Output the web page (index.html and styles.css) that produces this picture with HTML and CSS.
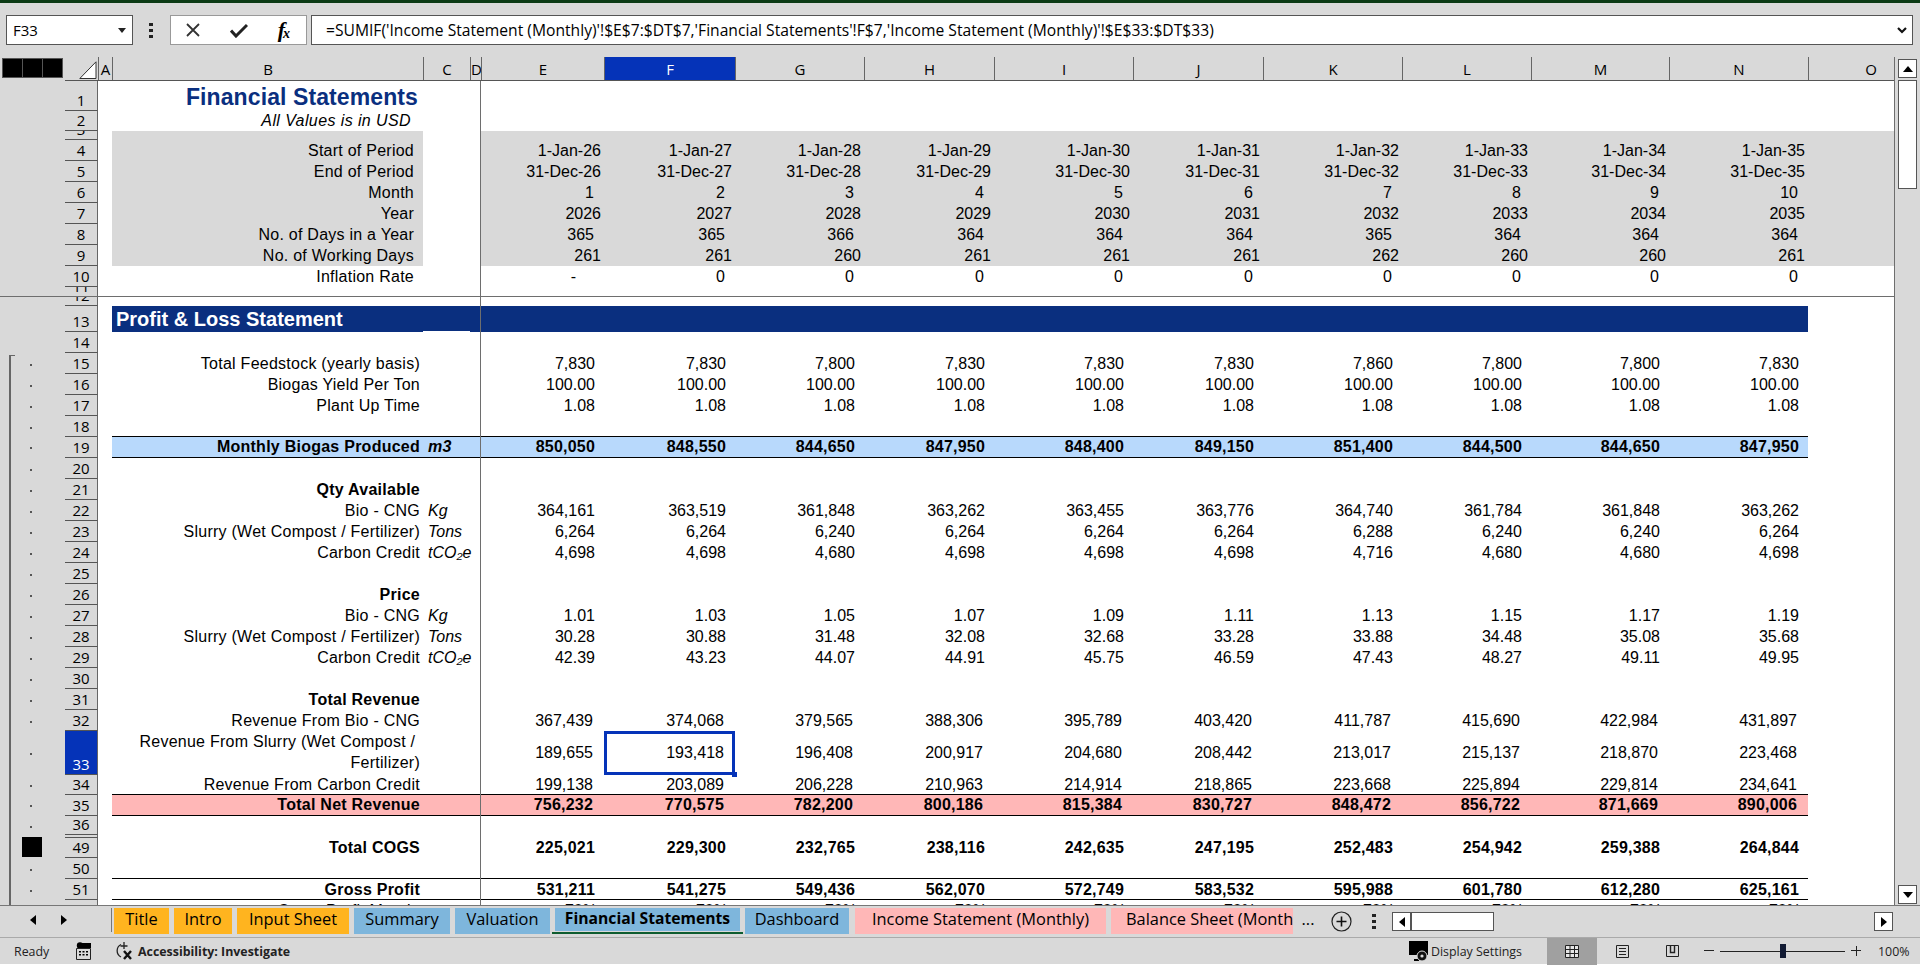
FILE: index.html
```html
<!DOCTYPE html>
<html>
<head>
  <meta charset="UTF-8">
  <title>Financial Statements</title>
  <link rel="stylesheet" href="styles.css">
</head>
<body>
  <div class="app-strip"></div>

  <!-- Formula bar -->
  <div class="formula-bar">
    <div class="name-box">F33<svg class="name-arrow" width="8" height="5" viewBox="0 0 8 5"><path d="M0 0h8L4 5z"/></svg></div>
    <div class="bar-dots"><i></i><i></i><i></i></div>
    <div class="cmd-box">
      <svg width="16" height="16" viewBox="0 0 16 16"><path d="M2 2l12 12M14 2L2 14" fill="none" stroke="#333" stroke-width="1.8"/></svg>
      <svg width="18" height="15" viewBox="0 0 18 15"><path d="M1 7.500l5 5.500L17 2" fill="none" stroke="#222" stroke-width="3"/></svg>
      <span class="fx">f<sub>x</sub></span>
    </div>
    <div class="formula-input">=SUMIF('Income Statement (Monthly)'!$E$7:$DT$7,'Financial Statements'!F$7,'Income Statement (Monthly)'!$E$33:$DT$33)<svg class="formula-chevron" width="10" height="7" viewBox="0 0 10 7"><path d="M1 1l4 4 4-4" fill="none" stroke="#111" stroke-width="2.2"/></svg></div>
  </div>

  <div class="sheet-area">
    <div class="sheet">
      <!-- Column headers -->
      <div class="col-head">
        <div class="level-btns"><i></i><i></i><i></i></div>
        <svg class="corner" width="18" height="18" viewBox="0 0 18 18"><path d="M17 .8V17.500H.8z" fill="#fff" stroke="#333"/></svg>
        <div class="col-letters">
          <span>A</span><span>B</span><span>C</span><span>D</span><span>E</span><span class="active">F</span><span>G</span><span>H</span><span>I</span><span>J</span><span>K</span><span>L</span><span>M</span><span>N</span><span class="last">O</span>
        </div>
      </div>

      <div class="row h30 title-row"><i class="gutter"></i><i class="num">1</i><i class="a"></i><div class="cells"><span class="lbl title">Financial Statements</span></div><i class="o"></i></div>
      <div class="row h20 sub-row"><i class="gutter"></i><i class="num">2</i><i class="a"></i><div class="cells"><span class="lbl subtitle">All Values is in USD</span></div><i class="o"></i></div>
      <div class="row h9 gray"><i class="gutter"></i><i class="num">3</i><i class="a"></i><div class="cells"></div><i class="o"></i></div>
      <div class="row gray date"><i class="gutter"></i><i class="num">4</i><i class="a"></i><div class="cells"><span class="lbl">Start of Period</span><span class="e">1-Jan-26</span><span>1-Jan-27</span><span>1-Jan-28</span><span>1-Jan-29</span><span>1-Jan-30</span><span>1-Jan-31</span><span>1-Jan-32</span><span>1-Jan-33</span><span>1-Jan-34</span><span>1-Jan-35</span></div><i class="o"></i></div>
      <div class="row gray date"><i class="gutter"></i><i class="num">5</i><i class="a"></i><div class="cells"><span class="lbl">End of Period</span><span class="e">31-Dec-26</span><span>31-Dec-27</span><span>31-Dec-28</span><span>31-Dec-29</span><span>31-Dec-30</span><span>31-Dec-31</span><span>31-Dec-32</span><span>31-Dec-33</span><span>31-Dec-34</span><span>31-Dec-35</span></div><i class="o"></i></div>
      <div class="row gray plain"><i class="gutter"></i><i class="num">6</i><i class="a"></i><div class="cells"><span class="lbl">Month</span><span class="e">1</span><span>2</span><span>3</span><span>4</span><span>5</span><span>6</span><span>7</span><span>8</span><span>9</span><span>10</span></div><i class="o"></i></div>
      <div class="row gray date"><i class="gutter"></i><i class="num">7</i><i class="a"></i><div class="cells"><span class="lbl">Year</span><span class="e">2026</span><span>2027</span><span>2028</span><span>2029</span><span>2030</span><span>2031</span><span>2032</span><span>2033</span><span>2034</span><span>2035</span></div><i class="o"></i></div>
      <div class="row gray plain"><i class="gutter"></i><i class="num">8</i><i class="a"></i><div class="cells"><span class="lbl">No. of Days in a Year</span><span class="e">365</span><span>365</span><span>366</span><span>364</span><span>364</span><span>364</span><span>365</span><span>364</span><span>364</span><span>364</span></div><i class="o"></i></div>
      <div class="row gray date"><i class="gutter"></i><i class="num">9</i><i class="a"></i><div class="cells"><span class="lbl">No. of Working Days</span><span class="e">261</span><span>261</span><span>260</span><span>261</span><span>261</span><span>261</span><span>262</span><span>260</span><span>260</span><span>261</span></div><i class="o"></i></div>
      <div class="row top-lbl plain"><i class="gutter"></i><i class="num">10</i><i class="a"></i><div class="cells"><span class="lbl">Inflation Rate</span><span class="e dash">-</span><span>0</span><span>0</span><span>0</span><span>0</span><span>0</span><span>0</span><span>0</span><span>0</span><span>0</span></div><i class="o"></i></div>
      <div class="row h10"><i class="gutter"></i><i class="num">11</i><i class="a"></i><div class="cells"></div><i class="o"></i></div>
      <div class="row h9"><i class="gutter"></i><i class="num">12</i><i class="a"></i><div class="cells"></div><i class="o"></i></div>
      <div class="row h26 navy"><i class="gutter"></i><i class="num">13</i><i class="a"></i><div class="cells"><span class="lbl section">Profit &amp; Loss Statement</span><span class="notch"></span></div><i class="o"></i></div>
      <div class="row"><i class="gutter"></i><i class="num">14</i><i class="a"></i><div class="cells"></div><i class="o"></i></div>
      <div class="row"><i class="gutter dot"></i><i class="num">15</i><i class="a"></i><div class="cells"><span class="lbl">Total Feedstock (yearly basis)</span><span class="e">7,830</span><span>7,830</span><span>7,800</span><span>7,830</span><span>7,830</span><span>7,830</span><span>7,860</span><span>7,800</span><span>7,800</span><span>7,830</span></div><i class="o"></i></div>
      <div class="row"><i class="gutter dot"></i><i class="num">16</i><i class="a"></i><div class="cells"><span class="lbl">Biogas Yield Per Ton</span><span class="e">100.00</span><span>100.00</span><span>100.00</span><span>100.00</span><span>100.00</span><span>100.00</span><span>100.00</span><span>100.00</span><span>100.00</span><span>100.00</span></div><i class="o"></i></div>
      <div class="row"><i class="gutter dot"></i><i class="num">17</i><i class="a"></i><div class="cells"><span class="lbl">Plant Up Time</span><span class="e">1.08</span><span>1.08</span><span>1.08</span><span>1.08</span><span>1.08</span><span>1.08</span><span>1.08</span><span>1.08</span><span>1.08</span><span>1.08</span></div><i class="o"></i></div>
      <div class="row"><i class="gutter dot"></i><i class="num">18</i><i class="a"></i><div class="cells"></div><i class="o"></i></div>
      <div class="row band blue bold"><i class="gutter dot"></i><i class="num">19</i><i class="a"></i><div class="cells"><span class="lbl">Monthly Biogas Produced</span><span class="u">m3</span><span class="e">850,050</span><span>848,550</span><span>844,650</span><span>847,950</span><span>848,400</span><span>849,150</span><span>851,400</span><span>844,500</span><span>844,650</span><span>847,950</span></div><i class="o"></i></div>
      <div class="row"><i class="gutter dot"></i><i class="num">20</i><i class="a"></i><div class="cells"></div><i class="o"></i></div>
      <div class="row bold"><i class="gutter dot"></i><i class="num">21</i><i class="a"></i><div class="cells"><span class="lbl">Qty Available</span></div><i class="o"></i></div>
      <div class="row"><i class="gutter dot"></i><i class="num">22</i><i class="a"></i><div class="cells"><span class="lbl">Bio - CNG</span><span class="u">Kg</span><span class="e">364,161</span><span>363,519</span><span>361,848</span><span>363,262</span><span>363,455</span><span>363,776</span><span>364,740</span><span>361,784</span><span>361,848</span><span>363,262</span></div><i class="o"></i></div>
      <div class="row"><i class="gutter dot"></i><i class="num">23</i><i class="a"></i><div class="cells"><span class="lbl">Slurry (Wet Compost / Fertilizer)</span><span class="u">Tons</span><span class="e">6,264</span><span>6,264</span><span>6,240</span><span>6,264</span><span>6,264</span><span>6,264</span><span>6,288</span><span>6,240</span><span>6,240</span><span>6,264</span></div><i class="o"></i></div>
      <div class="row"><i class="gutter dot"></i><i class="num">24</i><i class="a"></i><div class="cells"><span class="lbl">Carbon Credit</span><span class="u">tCO₂e</span><span class="e">4,698</span><span>4,698</span><span>4,680</span><span>4,698</span><span>4,698</span><span>4,698</span><span>4,716</span><span>4,680</span><span>4,680</span><span>4,698</span></div><i class="o"></i></div>
      <div class="row"><i class="gutter dot"></i><i class="num">25</i><i class="a"></i><div class="cells"></div><i class="o"></i></div>
      <div class="row bold"><i class="gutter dot"></i><i class="num">26</i><i class="a"></i><div class="cells"><span class="lbl">Price</span></div><i class="o"></i></div>
      <div class="row"><i class="gutter dot"></i><i class="num">27</i><i class="a"></i><div class="cells"><span class="lbl">Bio - CNG</span><span class="u">Kg</span><span class="e">1.01</span><span>1.03</span><span>1.05</span><span>1.07</span><span>1.09</span><span>1.11</span><span>1.13</span><span>1.15</span><span>1.17</span><span>1.19</span></div><i class="o"></i></div>
      <div class="row"><i class="gutter dot"></i><i class="num">28</i><i class="a"></i><div class="cells"><span class="lbl">Slurry (Wet Compost / Fertilizer)</span><span class="u">Tons</span><span class="e">30.28</span><span>30.88</span><span>31.48</span><span>32.08</span><span>32.68</span><span>33.28</span><span>33.88</span><span>34.48</span><span>35.08</span><span>35.68</span></div><i class="o"></i></div>
      <div class="row"><i class="gutter dot"></i><i class="num">29</i><i class="a"></i><div class="cells"><span class="lbl">Carbon Credit</span><span class="u">tCO₂e</span><span class="e">42.39</span><span>43.23</span><span>44.07</span><span>44.91</span><span>45.75</span><span>46.59</span><span>47.43</span><span>48.27</span><span>49.11</span><span>49.95</span></div><i class="o"></i></div>
      <div class="row"><i class="gutter dot"></i><i class="num">30</i><i class="a"></i><div class="cells"></div><i class="o"></i></div>
      <div class="row bold"><i class="gutter dot"></i><i class="num">31</i><i class="a"></i><div class="cells"><span class="lbl">Total Revenue</span></div><i class="o"></i></div>
      <div class="row wide"><i class="gutter dot"></i><i class="num">32</i><i class="a"></i><div class="cells"><span class="lbl">Revenue From Bio - CNG</span><span class="e">367,439</span><span>374,068</span><span>379,565</span><span>388,306</span><span>395,789</span><span>403,420</span><span>411,787</span><span>415,690</span><span>422,984</span><span>431,897</span></div><i class="o"></i></div>
      <div class="row h44 wide"><i class="gutter dot"></i><i class="num active">33</i><i class="a"></i><div class="cells"><span class="lbl wrap">Revenue From Slurry (Wet Compost /&nbsp;<br>Fertilizer)</span><span class="e">189,655</span><span class="selected">193,418<i class="handle"></i></span><span>196,408</span><span>200,917</span><span>204,680</span><span>208,442</span><span>213,017</span><span>215,137</span><span>218,870</span><span>223,468</span></div><i class="o"></i></div>
      <div class="row h20 wide"><i class="gutter dot"></i><i class="num">34</i><i class="a"></i><div class="cells"><span class="lbl">Revenue From Carbon Credit</span><span class="e">199,138</span><span>203,089</span><span>206,228</span><span>210,963</span><span>214,914</span><span>218,865</span><span>223,668</span><span>225,894</span><span>229,814</span><span>234,641</span></div><i class="o"></i></div>
      <div class="row band pink bold wide"><i class="gutter dot"></i><i class="num">35</i><i class="a"></i><div class="cells"><span class="lbl">Total Net Revenue</span><span class="e">756,232</span><span>770,575</span><span>782,200</span><span>800,186</span><span>815,384</span><span>830,727</span><span>848,472</span><span>856,722</span><span>871,669</span><span>890,006</span></div><i class="o"></i></div>
      <div class="row h19"><i class="gutter dot"></i><i class="num">36</i><i class="a"></i><div class="cells"></div><i class="o"></i></div>
      <div class="row h3"><i class="gutter"></i><i class="num empty"></i><i class="a"></i><div class="cells"></div><i class="o"></i></div>
      <div class="row h20 bold"><i class="gutter"><b class="level-mark"></b></i><i class="num">49</i><i class="a"></i><div class="cells"><span class="lbl">Total COGS</span><span class="e">225,021</span><span>229,300</span><span>232,765</span><span>238,116</span><span>242,635</span><span>247,195</span><span>252,483</span><span>254,942</span><span>259,388</span><span>264,844</span></div><i class="o"></i></div>
      <div class="row"><i class="gutter dot"></i><i class="num">50</i><i class="a"></i><div class="cells rule-below"></div><i class="o"></i></div>
      <div class="row bold"><i class="gutter dot"></i><i class="num">51</i><i class="a"></i><div class="cells rule-below"><span class="lbl">Gross Profit</span><span class="e">531,211</span><span>541,275</span><span>549,436</span><span>562,070</span><span>572,749</span><span>583,532</span><span>595,988</span><span>601,780</span><span>612,280</span><span>625,161</span></div><i class="o"></i></div>
      <div class="row pct"><i class="gutter"></i><i class="num">52</i><i class="a"></i><div class="cells"><span class="lbl">Gross Profit Margin</span><span class="e">70%</span><span>70%</span><span>70%</span><span>70%</span><span>70%</span><span>70%</span><span>70%</span><span>70%</span><span>70%</span><span>70%</span></div><i class="o"></i></div>

      <!-- Freeze panes and outline bracket -->
      <div class="freeze-v"></div>
      <div class="freeze-h"></div>
      <div class="outline-bracket"></div>
    </div>

    <div class="v-scroll">
      <div class="sb-btn"><svg width="10" height="6" viewBox="0 0 10 6"><path d="M5 0l5 6H0z"/></svg></div>
      <div class="sb-thumb"></div>
      <div class="sb-btn sb-down"><svg width="10" height="6" viewBox="0 0 10 6"><path d="M0 0h10L5 6z"/></svg></div>
    </div>
  </div>

  <!-- Sheet tabs -->
  <div class="tab-bar">
    <div class="tab-nav">
      <svg width="6" height="10" viewBox="0 0 6 10"><path d="M6 0v10L0 5z"/></svg>
      <svg width="6" height="10" viewBox="0 0 6 10"><path d="M0 0v10l6-5z"/></svg>
    </div>
    <div class="tab orange t-title">Title</div>
    <div class="tab orange t-intro">Intro</div>
    <div class="tab orange t-input">Input Sheet</div>
    <div class="tab blue t-summary">Summary</div>
    <div class="tab blue t-valuation">Valuation</div>
    <div class="tab-active"><div class="tab blue t-fin">Financial Statements</div></div>
    <div class="tab blue t-dash">Dashboard</div>
    <div class="tab pink t-income">Income Statement (Monthly)</div>
    <div class="tab pink t-balance">Balance Sheet (Monthly)</div>
    <span class="tab-more">...</span>
    <svg class="tab-add" width="21" height="21" viewBox="0 0 21 21"><circle cx="10.500" cy="10.500" r="9.500" fill="none" stroke="#222" stroke-width="1.2"/><path d="M10.500 5.500v10M5.500 10.500h10" stroke="#111" stroke-width="1.6"/></svg>
    <div class="bar-dots tab-dots"><i></i><i></i><i></i></div>
    <div class="h-scroll">
      <div class="hs-btn"><svg width="6" height="10" viewBox="0 0 6 10"><path d="M6 0v10L0 5z"/></svg></div>
      <div class="hs-thumb"></div>
    </div>
    <div class="hs-btn hs-right"><svg width="6" height="10" viewBox="0 0 6 10"><path d="M0 0v10l6-5z"/></svg></div>
  </div>

  <!-- Status bar -->
  <div class="status-bar">
    <span class="ready">Ready</span>
    <svg class="macro-icon" width="15" height="18" viewBox="0 0 15 18"><circle cx="4" cy="3.500" r="3.200"/><path d="M6 1h9v5H6z"/><path d="M.5 6.500h14v11H.5z" fill="none" stroke="#222"/><path d="M3 9h2v1.500H3zM6.500 9h2v1.500h-2zM10 9h2v1.500h-2zM3 12h2v1.500H3zM6.500 12h2v1.500h-2zM10 12h2v1.500h-2z"/></svg>
    <svg class="a11y-icon" width="20" height="20" viewBox="0 0 20 20"><path d="M6 3.500a7 7 0 0 0 0 12.500" fill="none" stroke="#222" stroke-width="1.3"/><path d="M9 1v7M5.500 5h7" fill="none" stroke="#222" stroke-width="1.3"/><path d="M9 10l7 8M16 10l-7 8" stroke="#111" stroke-width="2.4"/></svg>
    <span class="a11y">Accessibility: Investigate</span>
    <svg class="display-icon" width="20" height="21" viewBox="0 0 20 21"><path d="M0 0h19v14H0z"/><path d="M5 18h5v2H5z"/><circle cx="13" cy="15" r="5" fill="#111" stroke="#d9d9d9"/><circle cx="13" cy="15" r="1.600" fill="#d9d9d9"/></svg>
    <span class="display-text">Display Settings</span>
    <div class="view-btn view-on"><svg width="14" height="13" viewBox="0 0 14 13"><path d="M.5.500h13v12H.5zM.5 4.500h13M.5 8.500h13M5 .5v12M9.500.5v12" fill="#e6e6e6" stroke="#222"/></svg></div>
    <div class="view-btn"><svg width="13" height="13" viewBox="0 0 13 13"><path d="M.5.500h12v12H.5z" fill="none" stroke="#222"/><path d="M3 3.500h7M3 6.500h7M3 9.500h7" stroke="#222"/></svg></div>
    <div class="view-btn"><svg width="13" height="12" viewBox="0 0 13 12"><path d="M.5.500h12v11H.5z" fill="none" stroke="#222"/><path d="M4.500.5v7h4v-7" fill="none" stroke="#222" stroke-width="1.400"/></svg></div>
    <span class="zoom-sign zoom-minus"></span>
    <div class="zoom-track"><i></i></div>
    <span class="zoom-sign zoom-plus"></span>
    <span class="zoom-pct">100%</span>
  </div>
</body>
</html>
```

FILE: styles.css
```css
html, body {
  margin: 0;
  padding: 0;
}
body {
  width: 1920px;
  height: 966px;
  overflow: hidden;
  background-color: #fff;
  font-family: "Liberation Sans", Arial, sans-serif;
  color: #000;
}
i {
  font-style: normal;
}
.app-strip {
  height: 3px;
  background-color: #0b3a14;
}

/* Formula bar */
.formula-bar {
  height: 54px;
  display: flex;
  align-items: flex-start;
  padding: 12px 7px 0 6px;
  box-sizing: border-box;
  background-color: #d9d9d9;
  font-family: "Open Sans", sans-serif;
}
.name-box {
  width: 127px;
  height: 30px;
  box-sizing: border-box;
  display: flex;
  align-items: center;
  justify-content: space-between;
  padding: 0 6px 0 6px;
  background-color: #fff;
  border: 1px solid #555;
  font-size: 15px;
}
.name-arrow path {
  fill: #222;
}
.bar-dots {
  width: 4px;
  display: flex;
  flex-direction: column;
  gap: 3px;
  margin: 8px 17px 0 16px;
}
.bar-dots i {
  width: 4px;
  height: 3px;
  background-color: #222;
}
.cmd-box {
  width: 137px;
  height: 30px;
  box-sizing: border-box;
  display: flex;
  align-items: center;
  justify-content: space-between;
  padding: 0 16px 0 14px;
  background-color: #fff;
  border: 1px solid #999;
  margin-right: 4px;
}
.fx {
  font-family: "Liberation Serif", serif;
  font-style: italic;
  font-weight: bold;
  font-size: 22px;
  line-height: 22px;
}
.fx sub {
  font-size: 14px;
  line-height: 0;
  vertical-align: -1px;
  margin-left: -2px;
}
.formula-input {
  flex: 1;
  height: 30px;
  box-sizing: border-box;
  display: flex;
  align-items: center;
  justify-content: space-between;
  padding: 0 5px 0 14px;
  background-color: #fff;
  border: 1px solid #555;
  font-size: 15.65px;
  white-space: nowrap;
}

/* Sheet */
.sheet-area {
  height: 848px;
  display: flex;
  background-color: #d9d9d9;
}
.sheet {
  position: relative;
  width: 1895px;
  height: 848px;
  overflow: hidden;
  border-right: 1px solid #6e6e6e;
  box-sizing: border-box;
}
.col-head {
  position: relative;
  height: 24px;
  display: flex;
  justify-content: flex-end;
  border-bottom: 1px solid #555;
  margin-left: 65px;
  box-sizing: border-box;
  margin-right: -1px;
}
.level-btns {
  position: absolute;
  left: -63px;
  top: 1px;
  display: flex;
  border: 1px solid #555;
  background-color: #555;
  gap: 1px;
}
.level-btns i {
  width: 19px;
  height: 18px;
  background-color: #000;
}
.corner {
  position: absolute;
  left: 14px;
  top: 4px;
}
.col-letters {
  width: 1796px;
  display: grid;
  grid-template-columns: 14px 311px 47px 11px 123px 131px 129px 130px 139px 130px 139px 129px 138px 139px 86px;
  font-family: "Open Sans", sans-serif;
  font-size: 15px;
  line-height: 24px;
  text-align: center;
}
.col-letters span {
  border-right: 1px solid #666;
  box-sizing: border-box;
  height: 23px;
  overflow: hidden;
}
.col-letters span:first-child {
  border-left: 1px solid #666;
  margin-left: -1px;
}
.col-letters .active {
  background-color: #0533b8;
  color: #fff;
}
.col-letters .last {
  border-right: none;
  padding-left: 38px;
}

.row {
  display: flex;
  height: 21px;
  font-size: 16px;
  line-height: 21px;
}
.h3 { height: 3px; }
.h9 { height: 9px; }
.h10 { height: 10px; }
.h19 { height: 19px; }
.h20 { height: 20px; line-height: 19px; }
.h26 { height: 26px; }
.h30 { height: 30px; }
.h44 { height: 44px; }

.gutter {
  position: relative;
  width: 65px;
  flex: none;
}
.gutter.dot::after {
  content: "";
  position: absolute;
  left: 30px;
  top: 50%;
  width: 2px;
  height: 2px;
  background-color: #555;
}
.level-mark {
  position: absolute;
  left: 22px;
  top: -1px;
  width: 20px;
  height: 20px;
  background-color: #000;
}
.num {
  width: 33px;
  flex: none;
  display: flex;
  align-items: flex-end;
  justify-content: center;
  overflow: hidden;
  box-sizing: border-box;
  border-bottom: 1px solid #555;
  border-right: 1px solid #666;
  font-family: "Open Sans", sans-serif;
  font-size: 15px;
  line-height: 20px;
}
.num.active {
  background-color: #0533b8;
  color: #fff;
}
.a {
  width: 14px;
  flex: none;
  background-color: #fff;
}
.cells {
  width: 1696px;
  flex: none;
  display: grid;
  grid-template-columns: 311px 47px 11px 123px 131px 129px 130px 139px 130px 139px 129px 138px 139px;
  grid-template-rows: 1fr;
  background-color: #fff;
  box-sizing: border-box;
}
.o {
  flex: 1;
  background-color: #fff;
}
.cells span {
  white-space: nowrap;
  text-align: right;
  padding-right: 9px;
  overflow: hidden;
}
.cells .lbl {
  grid-column: 1;
  padding-right: 3px;
  letter-spacing: 0.25px;
}
.cells .u {
  grid-column: 2;
  text-align: left;
  padding: 0 0 0 5px;
  font-style: italic;
  overflow: visible;
}
.cells .e {
  grid-column: 4;
}

/* Row variants */
.gray .cells {
  background: linear-gradient(to right, #d9d9d9 311px, #fff 311px, #fff 369px, #d9d9d9 369px);
}
.gray .o {
  background-color: #d9d9d9;
}
.gray .lbl, .top-lbl .lbl {
  padding-right: 9px;
}
.date .cells span:not(.lbl) {
  padding-right: 3px;
}
.plain .cells span:not(.lbl) {
  padding-right: 10px;
}
.plain .cells span.dash {
  padding-right: 28px;
}
.title-row .cells .title {
  padding-right: 5px;
  font-size: 23px;
  font-weight: bold;
  line-height: 32px;
  letter-spacing: 0.1px;
  color: #0a2f7f;
}
.sub-row .cells .subtitle {
  padding-right: 12px;
  font-style: italic;
  line-height: 20px;
  letter-spacing: 0.4px;
}
.navy .cells {
  background-color: #0a2f7f;
}
.navy .cells .section {
  text-align: left;
  padding: 0 0 0 4px;
  color: #fff;
  font-size: 20px;
  font-weight: bold;
  line-height: 26px;
  letter-spacing: 0;
  overflow: visible;
}
.cells .notch {
  padding: 0;
  border-bottom: 1px solid #fff;
}
.bold .cells {
  font-weight: bold;
  letter-spacing: 0.2px;
}
.band .cells {
  border-top: 1px solid #000;
  border-bottom: 1px solid #000;
  line-height: 19px;
}
.band.blue {
  margin-top: -1px;
  height: 22px;
}
.band.blue .cells {
  background-color: #b8d9fc;
}
.band.pink {
  margin-top: -1px;
  height: 22px;
}
.band.pink .cells {
  background-color: #ffb7b7;
}
.band .num {
  padding-top: 1px;
}
.wide .cells span:not(.lbl) {
  padding-right: 11px;
}
.rule-below {
  border-bottom: 1px solid #000;
}
.h44 .cells span:not(.lbl) {
  display: flex;
  align-items: center;
  justify-content: flex-end;
  padding-bottom: 2px;
}
.cells .wrap {
  white-space: normal;
}
.cells .selected {
  position: relative;
  overflow: visible;
  box-shadow: inset 0 0 0 3px #0533b8;
}
.handle {
  position: absolute;
  right: -2px;
  bottom: -2px;
  width: 5px;
  height: 5px;
  background-color: #0533b8;
}
.pct .cells span:not(.lbl) {
  padding-right: 7px;
}

/* Overlays on the grid */
.freeze-v {
  position: absolute;
  left: 480px;
  top: 24px;
  bottom: 0;
  width: 1px;
  background-color: #6e6e6e;
}
.freeze-h {
  position: absolute;
  left: 0;
  right: 0;
  top: 239px;
  height: 1px;
  background-color: #6e6e6e;
}
.outline-bracket {
  position: absolute;
  left: 9px;
  top: 298px;
  bottom: 0;
  width: 4px;
  border-top: 1px solid #666;
  border-left: 2px solid #666;
}

/* Vertical scrollbar */
.v-scroll {
  position: relative;
  flex: 1;
  padding: 2px 3px 0 3px;
}
.sb-btn {
  width: 19px;
  height: 19px;
  box-sizing: border-box;
  display: flex;
  align-items: center;
  justify-content: center;
  background-color: #fff;
  border: 1px solid #555;
}
.sb-thumb {
  width: 19px;
  height: 109px;
  box-sizing: border-box;
  margin-top: 2px;
  background-color: #fff;
  border: 1px solid #555;
}
.sb-down {
  position: absolute;
  left: 3px;
  bottom: 1px;
}

/* Tabs */
.tab-bar {
  height: 32px;
  display: flex;
  align-items: flex-start;
  box-sizing: border-box;
  border-top: 1px solid #777;
  background-color: #d9d9d9;
  font-family: "Open Sans", sans-serif;
  font-size: 16.4px;
}
.tab-nav {
  width: 112px;
  height: 24px;
  margin-top: 2px;
  box-sizing: border-box;
  display: flex;
  align-items: center;
  gap: 25px;
  padding-left: 30px;
  border-right: 1px solid #777;
}
.tab {
  height: 26px;
  margin-top: 2px;
  box-sizing: border-box;
  flex: none;
  overflow: hidden;
  white-space: nowrap;
  line-height: 22px;
  text-align: center;
  margin-left: 2px;
  margin-right: 2px;
}
.tab.orange { background-color: #ffb41f; }
.tab.blue { background-color: #7eb6dc; }
.tab.pink { background-color: #ffb7b7; }
.t-title { width: 55px; }
.t-intro { width: 58px; margin-left: 3px; }
.t-input { width: 112px; margin-left: 3px; }
.t-summary { width: 96px; margin-left: 3px; }
.t-valuation { width: 95px; margin-left: 3px; }
.tab-active {
  flex: none;
  width: 191px;
  height: 28px;
  box-sizing: border-box;
  margin-left: 0;
  border-bottom: 2px solid #0e5c2f;
  background-color: #d9d9d9;
}
.t-fin {
  width: 185px;
  height: 23px;
  margin-left: 3px;
  font-size: 15.7px;
  font-weight: bold;
  line-height: 21px;
}
.t-dash { width: 104px; margin-left: 2px; margin-right: 6px; }
.t-income { width: 251px; margin-left: 0; margin-right: 5px; }
.t-balance {
  width: 182px;
  margin: 2px 0 0 0;
  text-align: left;
  padding-left: 15px;
}
.tab-more {
  width: 30px;
  line-height: 22px;
  text-align: center;
  margin-top: 2px;
}
.tab-add {
  margin: 5px 0 0 8px;
}
.bar-dots.tab-dots {
  margin: 8px 16px 0 20px;
}
.h-scroll {
  display: flex;
  width: 102px;
  height: 19px;
  margin-top: 6px;
  box-sizing: border-box;
  background-color: #fff;
  border: 1px solid #555;
}
.hs-btn {
  width: 19px;
  height: 19px;
  box-sizing: border-box;
  display: flex;
  align-items: center;
  justify-content: center;
  background-color: #fff;
  border: 1px solid #555;
}
.h-scroll .hs-btn {
  height: 17px;
  border-width: 0 2px 0 0;
}
.hs-right {
  margin: 6px 0 0 380px;
}

/* Status bar */
.status-bar {
  height: 27px;
  display: flex;
  align-items: center;
  box-sizing: border-box;
  border-top: 1px solid #aaa;
  background-color: #d9d9d9;
  font-family: "Open Sans", sans-serif;
  font-size: 12.4px;
  color: #222;
}
.ready {
  margin-left: 14px;
  width: 62px;
}
.macro-icon {
  width: 15px;
}
.a11y-icon {
  margin-left: 24px;
}
.a11y {
  margin-left: 3px;
  width: 1271px;
  font-weight: bold;
}
.display-text {
  margin-left: 2px;
  width: 116px;
}
.view-btn {
  width: 50px;
  height: 27px;
  display: flex;
  align-items: center;
  justify-content: center;
}
.view-on {
  background-color: #a0a0a0;
}
.zoom-sign {
  position: relative;
  width: 10px;
  height: 10px;
}
.zoom-minus {
  margin-left: 7px;
}
.zoom-minus::before, .zoom-plus::before {
  content: "";
  position: absolute;
  left: 0;
  top: 4px;
  width: 10px;
  height: 1px;
  background-color: #222;
}
.zoom-plus::after {
  content: "";
  position: absolute;
  left: 4.5px;
  top: 0;
  width: 1px;
  height: 10px;
  background-color: #222;
}
.zoom-track {
  position: relative;
  width: 125px;
  height: 1px;
  margin: 0 6px;
  background-color: #222;
}
.zoom-track i {
  position: absolute;
  left: 60px;
  top: -7px;
  width: 6px;
  height: 14px;
  background-color: #111a33;
}
.zoom-pct {
  margin-left: 17px;
}
```
